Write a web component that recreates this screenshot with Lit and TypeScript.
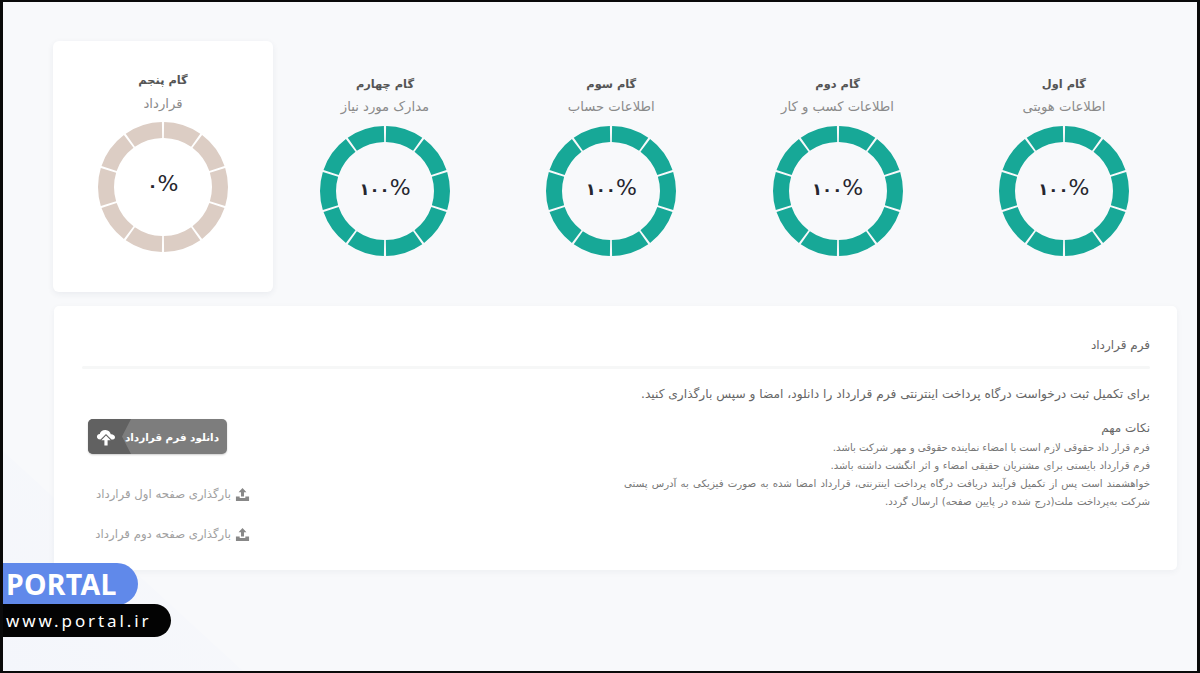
import { LitElement, html, css, svg } from "lit";
import { customElement } from "lit/decorators.js";

const steps = [
  { t: "گام اول", s: "اطلاعات هویتی", p: "۱۰۰", done: true },
  { t: "گام دوم", s: "اطلاعات کسب و کار", p: "۱۰۰", done: true },
  { t: "گام سوم", s: "اطلاعات حساب", p: "۱۰۰", done: true },
  { t: "گام چهارم", s: "مدارک مورد نیاز", p: "۱۰۰", done: true },
  { t: "گام پنجم", s: "قرارداد", p: "۰", done: false },
];

const notes = [
  { c: "l1", t: "فرم قرار داد حقوقی لازم است با امضاء نماینده حقوقی و مهر شرکت باشد." },
  { c: "l2", t: "فرم قرارداد بایستی برای مشتریان حقیقی امضاء و اثر انگشت داشته باشد." },
  { c: "l3", t: "خواهشمند است پس از تکمیل فرآیند دریافت درگاه پرداخت اینترنتی، قرارداد امضا شده به صورت فیزیکی به آدرس پستی" },
  { c: "l2", t: "شرکت به‌پرداخت ملت(درج شده در پایین صفحه) ارسال گردد." },
];

const ring = (done: boolean) => svg`
  <svg class="ring" viewBox="0 0 132 132" width="132" height="132">
    <circle cx="66" cy="66" r="57" fill="none" stroke=${done ? "#17a897" : "#dccdc4"} stroke-width="16"
      pathLength="360" stroke-dasharray="34 2" stroke-dashoffset="-1" transform="rotate(-90 66 66)"></circle>
  </svg>`;

@customElement("app-root")
export class AppRoot extends LitElement {
  static styles = css`
    :host { display: block; width: 1200px; height: 673px; font-family: "DejaVu Sans", "Noto Sans", sans-serif; }
    * { box-sizing: border-box; }
    .frame {
      position: relative; width: 1200px; height: 673px; overflow: hidden; background: #f8f9fb;
      border: solid #0a0a0a; border-width: 2px 3px 2px 3px;
      padding: 39px 20px 0 51px; direction: rtl;
    }
    .shape {
      position: absolute; left: 0; bottom: 0; width: 240px; height: 220px;
      background: linear-gradient(45deg, #f4f6fb, #f8f9fb);
      clip-path: polygon(0 0, 100% 100%, 0 100%);
    }
    .steps { position: relative; display: flex; height: 265px; }
    .step { flex: none; width: 226.3px; display: flex; flex-direction: column; align-items: center; padding-top: 34px; }
    .step.active {
      width: 220px; height: 251px; margin-right: -1.2px; background: #fff; border-radius: 6px; padding-top: 30px;
      box-shadow: 0 2px 6px rgba(40, 50, 80, 0.07);
    }
    .title { font-size: 11.4px; font-weight: 700; color: #555; line-height: 18px; white-space: nowrap; }
    .sub { font-size: 13.2px; color: #8a8a8a; line-height: 18px; margin-top: 5px; white-space: nowrap; }
    .active .sub { margin-top: 6px; }
    .dial { position: relative; width: 132px; height: 132px; margin-top: 9px; display: grid; place-items: center; }
    .active .dial { margin-top: 8px; }
    .ring { position: absolute; inset: 0; display: block; }
    .pct { position: relative; top: -4px; display: flex; align-items: baseline; direction: ltr; color: #26262e; }
    .num { font-size: 16.5px; font-weight: 700; }
    .sign { font-size: 22px; }
    .panel {
      position: relative; width: 1123px; height: 264px; background: #fff; border-radius: 5px;
      padding: 29px 27px 0 28px; box-shadow: 0 2px 6px rgba(40, 50, 80, 0.05);
    }
    .head { font-size: 12px; color: #666; line-height: 20px; }
    .rule { height: 3px; border-radius: 2px; background: #f6f7f7; margin-top: 11px; }
    .body { display: flex; justify-content: space-between; }
    .text { padding-top: 15px; }
    .lead { font-size: 12.2px; color: #666; line-height: 20px; white-space: nowrap; }
    .nh { font-size: 12px; color: #666; line-height: 18px; margin-top: 15px; }
    .notes { font-size: 10.2px; color: #777; line-height: 18px; margin-top: 2px; white-space: nowrap; }
    .l1 { word-spacing: -0.2px; }
    .l2 { word-spacing: 0.4px; }
    .l3 { word-spacing: 0.9px; }
    .actions { width: 170px; display: flex; flex-direction: column; align-items: flex-start; padding: 50px 0 0 6px; }
    .btn {
      position: relative; align-self: flex-end; width: 139px; height: 35px; border-radius: 5px; background: #7d7d7d;
      box-shadow: 0 1px 2px rgba(0,0,0,.2); overflow: hidden; display: flex; align-items: center;
    }
    .btn .lab { flex: 1; font-size: 10.4px; font-weight: 700; color: #fff; padding-right: 8px; white-space: nowrap; }
    .btn .side {
      position: absolute; left: 0; top: 0; width: 43px; height: 35px; background: #616161;
      clip-path: polygon(0 0, 100% 0, 34px 50%, 100% 100%, 0 100%);
      display: flex; align-items: center; padding-left: 8px; direction: ltr;
    }
    .up { display: flex; align-items: center; gap: 4px; font-size: 11.7px; color: #a0a0a0; white-space: nowrap; height: 20px; margin-right: 2px; }
    .up.a { margin-top: 30px; }
    .up.b { margin-top: 20px; }
    .badge { position: absolute; left: -3px; top: 561px; direction: ltr; }
    .bl {
      width: 138px; height: 42px; background: #6089ea; border-radius: 0 21px 21px 0; color: #fff;
      font: 700 28.5px/42px "Noto Sans", sans-serif; padding-left: 6px; letter-spacing: 0.3px;
    }
    .bk {
      width: 171px; height: 33px; margin-top: -1px; background: #030303; border-radius: 0 17px 17px 0; color: #fff;
      font: 400 17px/33px "Noto Sans", sans-serif; padding-left: 6px; letter-spacing: 2.9px; position: relative;
    }
  `;

  render() {
    const tray = html`<svg width="15" height="15" viewBox="0 0 16 16" fill="#888">
      <path d="M8 1 L12.2 5.6 H9.6 V10 H6.4 V5.6 H3.8 Z"></path>
      <path d="M1 10 H5 V11.6 H11 V10 H15 V15 H1 Z"></path></svg>`;
    return html`<div class="frame">
      <div class="shape"></div>
      <div class="steps">
        ${steps.map(
          (s) => html`<div class="step ${s.done ? "" : "active"}">
            <div class="title">${s.t}</div>
            <div class="sub">${s.s}</div>
            <div class="dial">${ring(s.done)}<span class="pct"><span class="num">${s.p}</span><span class="sign">%</span></span></div>
          </div>`
        )}
      </div>
      <div class="panel">
        <div class="head">فرم قرارداد</div>
        <div class="rule"></div>
        <div class="body">
          <div class="text">
            <div class="lead">برای تکمیل ثبت درخواست درگاه پرداخت اینترنتی فرم قرارداد را دانلود، امضا و سپس بارگذاری کنید.</div>
            <div class="nh">نکات مهم</div>
            <div class="notes">${notes.map((n) => html`<div class=${n.c}>${n.t}</div>`)}</div>
          </div>
          <div class="actions">
            <div class="btn">
              <span class="lab">دانلود فرم قرارداد</span>
              <span class="side">
                <svg width="20" height="20" viewBox="0 0 20 20" fill="#fff">
                  <path d="M4.5 12.5 C1.5 12.5 0.5 10.6 1 9 C1.4 7.6 2.6 6.9 3.8 7 C4.4 4.4 6.8 2.8 9.6 3 C12.2 3.2 14.4 5 14.8 7.2 C17 7 19 8.4 19 10.2 C19 11.6 18 12.5 15.5 12.5 L10 7 Z"></path>
                  <path d="M10 8.4 L14.6 13.2 H11.6 V18.6 H8.4 V13.2 H5.4 Z"></path>
                </svg>
              </span>
            </div>
            <div class="up a">${tray}<span>بارگذاری صفحه اول قرارداد</span></div>
            <div class="up b">${tray}<span>بارگذاری صفحه دوم قرارداد</span></div>
          </div>
        </div>
      </div>
      <div class="badge">
        <div class="bl">PORTAL</div>
        <div class="bk">www.portal.ir</div>
      </div>
    </div>`;
  }
}
